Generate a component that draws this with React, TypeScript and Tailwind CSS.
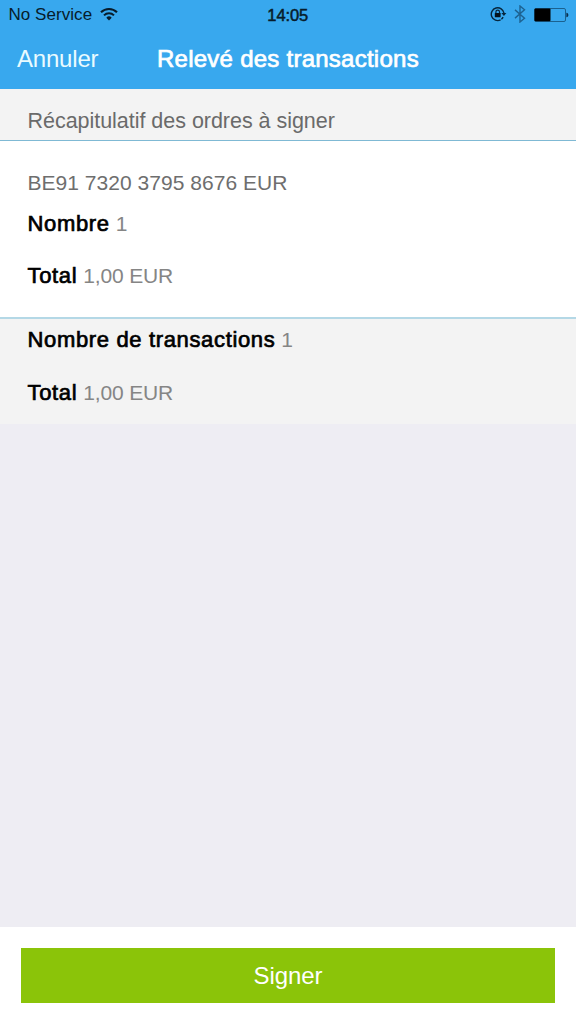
import type { ReactNode } from "react";

function WifiIcon() {
  return (
    <svg className="ml-[8px] mt-[-3px] h-[14px] w-[18px]" viewBox="0 0 18 14" fill="none" stroke="#071c2b">
      <path d="M1 5.3a11.4 11.4 0 0 1 16 0" strokeWidth="2.1" />
      <path d="M4 8.4a7.1 7.1 0 0 1 10 0" strokeWidth="2" />
      <path d="M6.3 10.7a3.8 3.8 0 0 1 5.4 0L9 13.4z" fill="#071c2b" stroke="none" />
    </svg>
  );
}

function RotationLockIcon() {
  return (
    <svg className="mt-[-2px] h-[16px] w-[17px]" viewBox="0 0 17 16" fill="none" stroke="#06263d">
      <path d="M10.6 13.9A6.4 6.4 0 1 1 14 7.2" strokeWidth="1.4" />
      <path d="M13.1 11.1a6.4 6.4 0 0 1-1.7 2.2" strokeWidth="1.4" />
      <path d="M11.4 6.9h5l-2.5 3z" fill="#06263d" stroke="none" />
      <path d="M5.9 7.3V5.9a1.8 1.8 0 0 1 3.6 0v1.4" strokeWidth="1.2" />
      <rect x="4.8" y="7" width="5.8" height="4.3" rx=".5" fill="#06121c" stroke="none" />
    </svg>
  );
}

function BluetoothIcon() {
  return (
    <svg className="ml-[7px] mt-[-2px] h-[18px] w-[12px]" viewBox="0 0 12 18" fill="none" stroke="#1d6291" strokeWidth="1.4">
      <path d="M1 4.9l9.5 8.3L6 17V1l4.5 3.8L1 13.1" />
    </svg>
  );
}

function BatteryIcon() {
  return (
    <svg className="ml-[8px] mt-[-2px] h-[15px] w-[36px]" viewBox="0 0 36 15">
      <rect x="0.5" y="1.5" width="31" height="13" rx="1.5" fill="none" stroke="#1b618f" strokeWidth="1" />
      <rect x="0.5" y="1.6" width="16" height="12.6" rx="1" fill="#000" />
      <path d="M32.4 5.7c2.6.2 2.6 4.4 0 4.6z" fill="#0a2f4b" />
    </svg>
  );
}

function Row({ label, value, className }: { label: string; value: ReactNode; className: string }) {
  return (
    <div className={`flex items-baseline whitespace-pre text-[22px] ${className}`}>
      <span className="tracking-[0.65px] text-black [-webkit-text-stroke:0.7px_black]">{label}</span>
      <span className="ml-[6px] text-[21px] tracking-[-0.15px] text-[#858585]">{value}</span>
    </div>
  );
}

export default function App() {
  return (
    <div className="flex h-[1024px] w-[576px] flex-col overflow-hidden bg-[#eeedf3] font-['Liberation_Sans',Arial,sans-serif] antialiased">
      <header className="flex h-[89px] flex-col bg-[#38a8ee]">
        <div className="grid h-[30px] grid-cols-3 items-center pl-[8.5px] pr-[6px] text-[17px] text-[#071c2b]">
          <div className="flex items-center whitespace-nowrap">
            <span className="tracking-[0.05px]">No Service</span>
            <WifiIcon />
          </div>
          <span className="pr-[3px] text-center text-[16.5px] leading-[22px] tracking-[-0.1px] [-webkit-text-stroke:0.5px_#071c2b]">14:05</span>
          <div className="flex items-center justify-end">
            <RotationLockIcon />
            <BluetoothIcon />
            <BatteryIcon />
          </div>
        </div>
        <nav className="flex h-[58px] items-center pl-[17px] text-[24px] text-white">
          <button className="w-[140px] text-left tracking-[-0.2px] text-[#e9fbff]">Annuler</button>
          <h1 className="tracking-[0.25px] [-webkit-text-stroke:0.7px_white]">Relevé des transactions</h1>
        </nav>
      </header>

      <h2 className="flex h-[52px] shrink-0 items-center border-b border-[#7fb9d4] bg-[#f3f3f3] pl-[27.5px] pt-[14px] text-[21.5px] tracking-[-0.03px] text-[#6a6a6a]">
        Récapitulatif des ordres à signer
      </h2>

      <section className="h-[178px] border-b-2 border-[#b4d8e6] bg-white pl-[27.5px] pt-[22px]">
        <div className="flex h-[40px] items-center text-[21px] tracking-[0.03px] text-[#6e6e6e]">BE91 7320 3795 8676 EUR</div>
        <Row label="Nombre" value="1" className="h-[40px] leading-[42px]" />
        <Row label="Total" value="1,00 EUR" className="h-[64px] leading-[66px]" />
      </section>

      <section className="h-[105px] bg-[#f3f3f3] pl-[27.5px]">
        <Row label="Nombre de transactions" value="1" className="h-[41px] leading-[42px]" />
        <Row label="Total" value="1,00 EUR" className="h-[64px] leading-[66px]" />
      </section>

      <footer className="mt-auto h-[97px] bg-white px-[21px] pt-[21px]">
        <button className="h-[55px] w-full bg-[#8bc409] text-[24px] tracking-[-0.1px] text-white">Signer</button>
      </footer>
    </div>
  );
}
